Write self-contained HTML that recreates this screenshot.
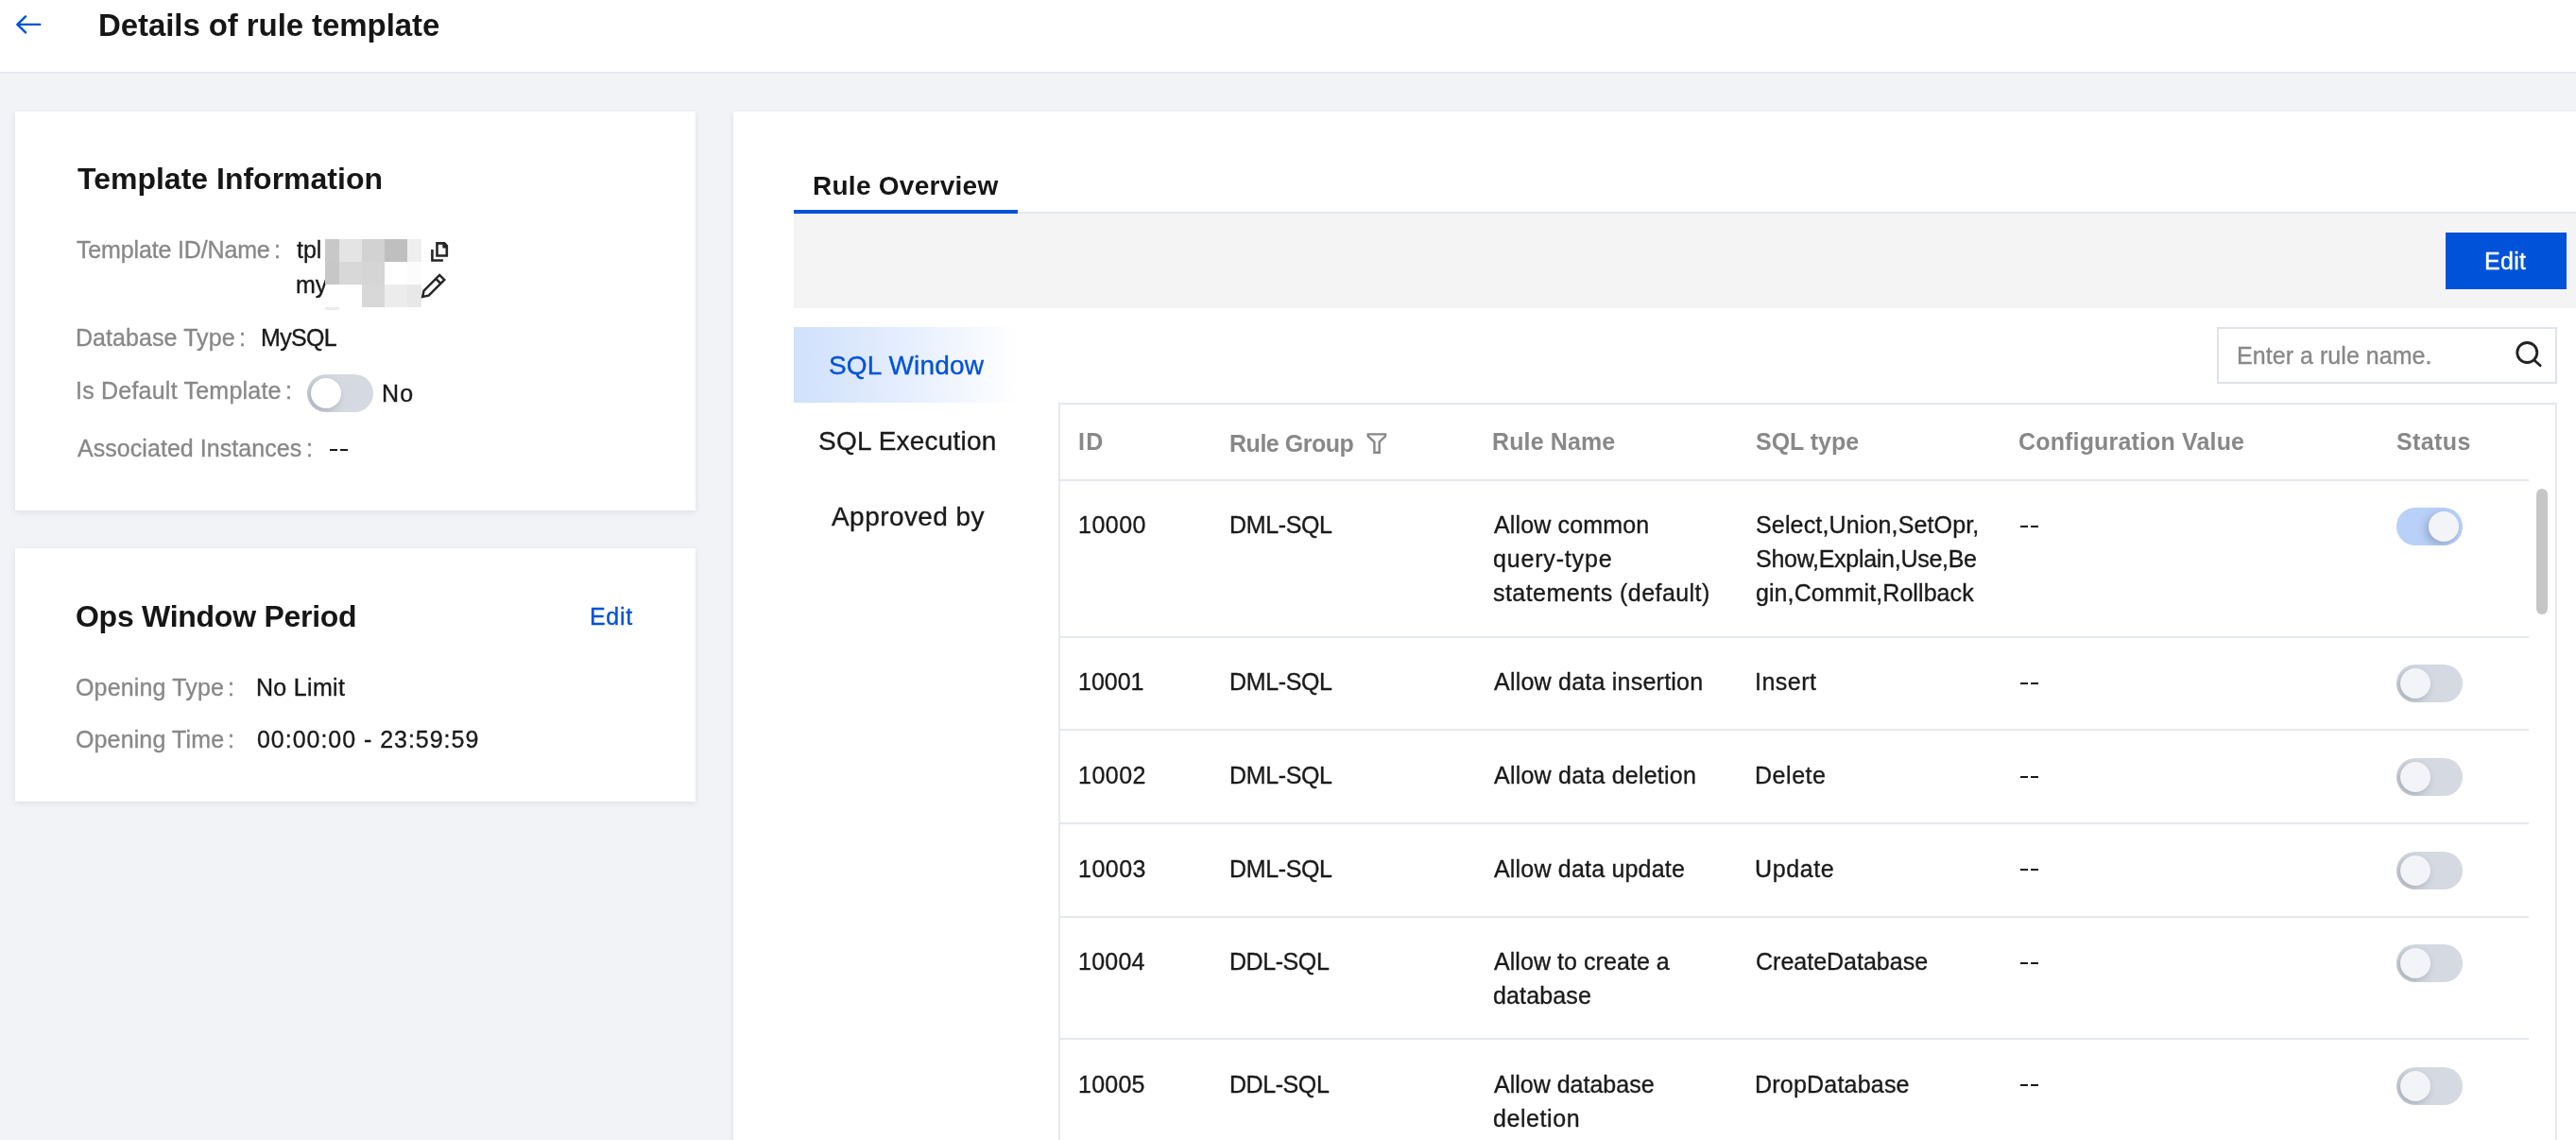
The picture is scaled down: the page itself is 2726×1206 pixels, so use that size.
<!DOCTYPE html>
<html><head><meta charset="utf-8"><title>Details of rule template</title>
<style>
html,body{margin:0;padding:0;}
body{width:2726px;height:1206px;overflow:hidden;position:relative;background:#f2f3f7;font-family:"Liberation Sans",sans-serif;color:#1a1a1a;}
.t{position:absolute;white-space:nowrap;line-height:36px;will-change:transform;-webkit-text-stroke:0.35px currentColor;}
.r{position:absolute;}
.sw{position:absolute;width:70px;height:40px;border-radius:20px;overflow:hidden;}
.sw.off{background:#d5d9e1;}
.sw.on{background:#b9d0f8;}
.sw i{position:absolute;top:4px;width:32px;height:32px;border-radius:50%;background:#f3f4f7;box-shadow:-3px 3px 8px rgba(40,50,70,0.28);}
.sw.w i{background:#ffffff;}
.sw.off i{left:4px;}
.sw.on i{left:34px;}
</style></head><body>
<div class="r" style="left:0px;top:0px;width:2726px;height:76px;background:#ffffff;"></div>
<div class="r" style="left:0px;top:76px;width:2726px;height:2px;background:#e5e8ee;"></div>
<svg class="r" style="left:0;top:0" width="60" height="60"><path d="M27.1 17.4 L18.4 25.9 L27.1 34.4 M18.4 25.9 H42.3" fill="none" stroke="#0052d9" stroke-width="2.4" stroke-linecap="round" stroke-linejoin="round"/></svg>
<div class="t" style="left:103.8px;top:9px;font-size:33px;font-weight:700;-webkit-text-stroke:0;color:#161616;letter-spacing:-0.08px;">Details of rule template</div>
<div class="r" style="left:16px;top:118px;width:720px;height:422px;background:#ffffff;box-shadow:0 2px 6px rgba(54,58,80,0.10)"></div>
<div class="t" style="left:81.6px;top:171px;font-size:32px;font-weight:700;-webkit-text-stroke:0;color:#161616;">Template Information</div>
<div class="t" style="left:81.3px;top:246px;font-size:25px;color:#888888;letter-spacing:-0.15px;">Template ID/Name</div>
<div class="t" style="left:289.5px;top:246px;font-size:25px;color:#888888;">:</div>
<div class="t" style="left:314.4px;top:246px;font-size:25px;">tpl</div>
<div class="t" style="left:312.7px;top:283px;font-size:25px;">my</div>
<div class="r" style="left:344px;top:253px;width:15px;height:24px;background:#c8c8c8;"></div>
<div class="r" style="left:359px;top:253px;width:24px;height:24px;background:#e4e4e4;"></div>
<div class="r" style="left:383px;top:253px;width:24px;height:24px;background:#d2d2d2;"></div>
<div class="r" style="left:407px;top:253px;width:24px;height:24px;background:#bfbfbf;"></div>
<div class="r" style="left:431px;top:253px;width:15px;height:24px;background:#efefef;"></div>
<div class="r" style="left:344px;top:277px;width:15px;height:24px;background:#c7c7c7;"></div>
<div class="r" style="left:359px;top:277px;width:24px;height:24px;background:#d8d8d8;"></div>
<div class="r" style="left:383px;top:277px;width:24px;height:24px;background:#d5d5d5;"></div>
<div class="r" style="left:431px;top:277px;width:15px;height:24px;background:#fcfcfc;"></div>
<div class="r" style="left:383px;top:301px;width:24px;height:24px;background:#d8d8d8;"></div>
<div class="r" style="left:407px;top:301px;width:24px;height:24px;background:#ececec;"></div>
<div class="r" style="left:431px;top:301px;width:15px;height:24px;background:#e8e8e8;"></div>
<div class="r" style="left:344px;top:325px;width:15px;height:3px;background:#ececec;"></div>
<svg class="r" style="left:440px;top:250px" width="40" height="70"><path d="M17.4 14.1 V25.5 H28.9" fill="none" stroke="#262626" stroke-width="2.6"/><path d="M22.5 7.4 H30.3 L32.8 10 V20.5 H22.5 Z" fill="none" stroke="#262626" stroke-width="2.6" stroke-linejoin="miter"/><path d="M28.3 6.1 L34.1 11.9 V12.6 H28.3 Z" fill="#262626"/><g transform="translate(7.2,64) rotate(-45)"><path d="M0 0 L5.5 -3.6 H29 V3.6 H5.5 Z M23.5 -3.6 V3.6" fill="none" stroke="#262626" stroke-width="2.5" stroke-linejoin="miter"/></g></svg>
<div class="t" style="left:79.9px;top:339px;font-size:25px;color:#888888;letter-spacing:0.07px;">Database Type</div>
<div class="t" style="left:252.8px;top:339px;font-size:25px;color:#888888;">:</div>
<div class="t" style="left:275.6px;top:339px;font-size:25px;letter-spacing:-0.65px;">MySQL</div>
<div class="t" style="left:79.5px;top:395px;font-size:25px;color:#888888;letter-spacing:0.22px;">Is Default Template</div>
<div class="t" style="left:301.8px;top:395px;font-size:25px;color:#888888;">:</div>
<div class="sw off w" style="left:325px;top:396px"><i></i></div>
<div class="t" style="left:403.7px;top:397.6px;font-size:25px;letter-spacing:1.10px;">No</div>
<div class="t" style="left:81.5px;top:456px;font-size:25px;color:#888888;letter-spacing:0.05px;">Associated Instances</div>
<div class="t" style="left:323.8px;top:456px;font-size:25px;color:#888888;">:</div>
<div class="r" style="left:348.6px;top:474.8px;width:8.1px;height:2.1px;background:#1a1a1a"></div><div class="r" style="left:360.0px;top:474.8px;width:8.1px;height:2.1px;background:#1a1a1a"></div>
<div class="r" style="left:16px;top:580px;width:720px;height:268px;background:#ffffff;box-shadow:0 2px 6px rgba(54,58,80,0.10)"></div>
<div class="t" style="left:80.4px;top:634px;font-size:32px;font-weight:700;-webkit-text-stroke:0;color:#161616;letter-spacing:-0.27px;">Ops Window Period</div>
<div class="t" style="left:624px;top:634px;font-size:25px;color:#0052d9;letter-spacing:0.67px;">Edit</div>
<div class="t" style="left:80px;top:709px;font-size:25px;color:#888888;letter-spacing:0.16px;">Opening Type</div>
<div class="t" style="left:240.6px;top:709px;font-size:25px;color:#888888;">:</div>
<div class="t" style="left:270.6px;top:709px;font-size:25px;letter-spacing:0.31px;">No Limit</div>
<div class="t" style="left:80px;top:764px;font-size:25px;color:#888888;letter-spacing:0.13px;">Opening Time</div>
<div class="t" style="left:240.6px;top:764px;font-size:25px;color:#888888;">:</div>
<div class="t" style="left:271.6px;top:764px;font-size:25px;letter-spacing:0.97px;">00:00:00 - 23:59:59</div>
<div class="r" style="left:776px;top:118px;width:1950px;height:1088px;background:#ffffff;box-shadow:0 2px 6px rgba(54,58,80,0.10)"></div>
<div class="t" style="left:859.6px;top:179px;font-size:28px;font-weight:700;-webkit-text-stroke:0;color:#161616;letter-spacing:0.27px;">Rule Overview</div>
<div class="r" style="left:1077px;top:224px;width:1649px;height:2px;background:#e5e8ee;"></div>
<div class="r" style="left:840px;top:222px;width:237px;height:4px;background:#0052d9;"></div>
<div class="r" style="left:840px;top:226px;width:1886px;height:100px;background:#f4f4f4;"></div>
<div class="r" style="left:2588px;top:246px;width:128px;height:60px;background:#0052d9;"></div>
<div class="t" style="left:2629px;top:258px;font-size:25px;color:#ffffff;letter-spacing:0.33px;">Edit</div>
<div class="r" style="left:840px;top:346px;width:238px;height:80px;background:linear-gradient(90deg,#d0e1fc 0%,#e3edfd 45%,#ffffff 100%);"></div>
<div class="t" style="left:877.4px;top:369px;font-size:28px;color:#0052d9;letter-spacing:0.17px;">SQL Window</div>
<div class="t" style="left:866.4px;top:449px;font-size:28px;letter-spacing:0.22px;">SQL Execution</div>
<div class="t" style="left:879.6px;top:529px;font-size:28px;letter-spacing:0.44px;">Approved by</div>
<div class="r" style="left:2346px;top:346px;width:360px;height:60px;background:#ffffff;box-sizing:border-box;border:2px solid #dfe3ea"></div>
<div class="t" style="left:2367px;top:358px;font-size:25px;color:#888888;letter-spacing:0.05px;">Enter a rule name.</div>
<svg class="r" style="left:2655px;top:355px" width="45" height="45"><circle cx="19.3" cy="18" r="10.5" fill="none" stroke="#222" stroke-width="2.8"/><path d="M27.6 26.8 L33.2 31.8" stroke="#222" stroke-width="2.8" stroke-linecap="round"/></svg>
<div class="r" style="left:1120px;top:426px;width:1586px;height:780px;background:#ffffff;box-sizing:border-box;border:2px solid #e5e8ee;border-bottom:none"></div>
<div class="t" style="left:1141px;top:449px;font-size:25px;font-weight:700;-webkit-text-stroke:0;color:#888888;letter-spacing:1.30px;">ID</div>
<div class="t" style="left:1301px;top:451px;font-size:25px;font-weight:700;-webkit-text-stroke:0;color:#888888;letter-spacing:-0.47px;">Rule Group</div>
<svg class="r" style="left:1436px;top:450px" width="40" height="40"><path d="M11.7 9.4 H30 V11.5 L23.7 17.5 V28.8 H18.4 V17.5 L11.7 11.5 Z" fill="none" stroke="#888" stroke-width="2.4" stroke-linejoin="miter"/></svg>
<div class="t" style="left:1579px;top:449px;font-size:25px;font-weight:700;-webkit-text-stroke:0;color:#888888;letter-spacing:0.12px;">Rule Name</div>
<div class="t" style="left:1858px;top:449px;font-size:25px;font-weight:700;-webkit-text-stroke:0;color:#888888;letter-spacing:-0.03px;">SQL type</div>
<div class="t" style="left:2136px;top:449px;font-size:25px;font-weight:700;-webkit-text-stroke:0;color:#888888;letter-spacing:0.16px;">Configuration Value</div>
<div class="t" style="left:2536px;top:449px;font-size:25px;font-weight:700;-webkit-text-stroke:0;color:#888888;letter-spacing:0.38px;">Status</div>
<div class="r" style="left:1122px;top:507px;width:1554px;height:2px;background:#e5e8ee;"></div>
<div class="r" style="left:1122px;top:673px;width:1554px;height:2px;background:#e5e8ee;"></div>
<div class="r" style="left:1122px;top:771px;width:1554px;height:2px;background:#e5e8ee;"></div>
<div class="r" style="left:1122px;top:870px;width:1554px;height:2px;background:#e5e8ee;"></div>
<div class="r" style="left:1122px;top:969px;width:1554px;height:2px;background:#e5e8ee;"></div>
<div class="r" style="left:1122px;top:1098px;width:1554px;height:2px;background:#e5e8ee;"></div>
<div class="r" style="left:2684px;top:517px;width:12px;height:133px;background:#c6c6c6;border-radius:6px"></div>
<div class="t" style="left:1141px;top:537px;font-size:25px;letter-spacing:0.48px;">10000</div>
<div class="t" style="left:1301px;top:537px;font-size:25px;letter-spacing:-0.37px;">DML-SQL</div>
<div class="t" style="left:1581px;top:537px;font-size:25px;letter-spacing:0.15px;">Allow common</div>
<div class="t" style="left:1580px;top:573px;font-size:25px;letter-spacing:0.83px;">query-type</div>
<div class="t" style="left:1580px;top:609px;font-size:25px;letter-spacing:0.44px;">statements (default)</div>
<div class="t" style="left:1858px;top:537px;font-size:25px;letter-spacing:0.15px;">Select,Union,SetOpr,</div>
<div class="t" style="left:1858px;top:573px;font-size:25px;letter-spacing:-0.28px;">Show,Explain,Use,Be</div>
<div class="t" style="left:1858px;top:609px;font-size:25px;letter-spacing:0.08px;">gin,Commit,Rollback</div>
<div class="r" style="left:2137.5px;top:555.8px;width:8.1px;height:2.1px;background:#1a1a1a"></div><div class="r" style="left:2148.9px;top:555.8px;width:8.1px;height:2.1px;background:#1a1a1a"></div>
<div class="sw on" style="left:2536px;top:537px"><i></i></div>
<div class="t" style="left:1141px;top:703px;font-size:25px;">10001</div>
<div class="t" style="left:1301px;top:703px;font-size:25px;letter-spacing:-0.37px;">DML-SQL</div>
<div class="t" style="left:1581px;top:703px;font-size:25px;letter-spacing:0.23px;">Allow data insertion</div>
<div class="t" style="left:1857px;top:703px;font-size:25px;letter-spacing:0.50px;">Insert</div>
<div class="r" style="left:2137.5px;top:721.8px;width:8.1px;height:2.1px;background:#1a1a1a"></div><div class="r" style="left:2148.9px;top:721.8px;width:8.1px;height:2.1px;background:#1a1a1a"></div>
<div class="sw off" style="left:2536px;top:703px"><i></i></div>
<div class="t" style="left:1141px;top:802px;font-size:25px;letter-spacing:0.50px;">10002</div>
<div class="t" style="left:1301px;top:802px;font-size:25px;letter-spacing:-0.37px;">DML-SQL</div>
<div class="t" style="left:1581px;top:802px;font-size:25px;letter-spacing:0.22px;">Allow data deletion</div>
<div class="t" style="left:1857px;top:802px;font-size:25px;letter-spacing:0.54px;">Delete</div>
<div class="r" style="left:2137.5px;top:820.8px;width:8.1px;height:2.1px;background:#1a1a1a"></div><div class="r" style="left:2148.9px;top:820.8px;width:8.1px;height:2.1px;background:#1a1a1a"></div>
<div class="sw off" style="left:2536px;top:802px"><i></i></div>
<div class="t" style="left:1141px;top:900.5px;font-size:25px;letter-spacing:0.50px;">10003</div>
<div class="t" style="left:1301px;top:900.5px;font-size:25px;letter-spacing:-0.37px;">DML-SQL</div>
<div class="t" style="left:1581px;top:900.5px;font-size:25px;letter-spacing:0.19px;">Allow data update</div>
<div class="t" style="left:1857px;top:900.5px;font-size:25px;letter-spacing:0.60px;">Update</div>
<div class="r" style="left:2137.5px;top:919.3px;width:8.1px;height:2.1px;background:#1a1a1a"></div><div class="r" style="left:2148.9px;top:919.3px;width:8.1px;height:2.1px;background:#1a1a1a"></div>
<div class="sw off" style="left:2536px;top:901px"><i></i></div>
<div class="t" style="left:1141px;top:999.3px;font-size:25px;letter-spacing:0.25px;">10004</div>
<div class="t" style="left:1301px;top:999.3px;font-size:25px;letter-spacing:-0.43px;">DDL-SQL</div>
<div class="t" style="left:1581px;top:999.3px;font-size:25px;letter-spacing:0.06px;">Allow to create a</div>
<div class="t" style="left:1580px;top:1035.3px;font-size:25px;letter-spacing:0.14px;">database</div>
<div class="t" style="left:1858px;top:999.3px;font-size:25px;">CreateDatabase</div>
<div class="r" style="left:2137.5px;top:1018.1px;width:8.1px;height:2.1px;background:#1a1a1a"></div><div class="r" style="left:2148.9px;top:1018.1px;width:8.1px;height:2.1px;background:#1a1a1a"></div>
<div class="sw off" style="left:2536px;top:999px"><i></i></div>
<div class="t" style="left:1141px;top:1128.5px;font-size:25px;letter-spacing:0.25px;">10005</div>
<div class="t" style="left:1301px;top:1128.5px;font-size:25px;letter-spacing:-0.43px;">DDL-SQL</div>
<div class="t" style="left:1581px;top:1128.5px;font-size:25px;">Allow database</div>
<div class="t" style="left:1580px;top:1164.5px;font-size:25px;letter-spacing:0.57px;">deletion</div>
<div class="t" style="left:1857px;top:1128.5px;font-size:25px;letter-spacing:0.21px;">DropDatabase</div>
<div class="r" style="left:2137.5px;top:1147.3px;width:8.1px;height:2.1px;background:#1a1a1a"></div><div class="r" style="left:2148.9px;top:1147.3px;width:8.1px;height:2.1px;background:#1a1a1a"></div>
<div class="sw off" style="left:2536px;top:1129px"><i></i></div>
</body></html>
